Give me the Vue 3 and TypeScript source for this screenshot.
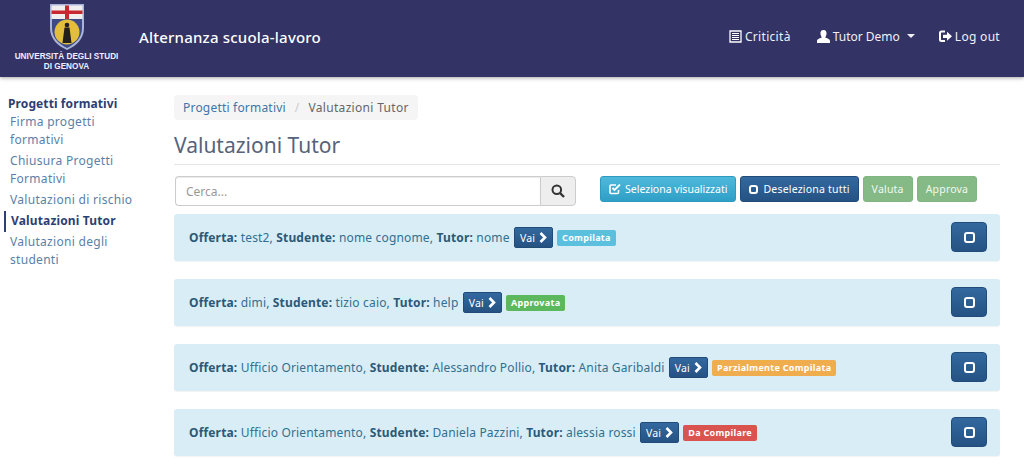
<script setup lang="ts">
type Row = {
  offerta: string;
  studente: string;
  tutor: string;
  stato: string;
  tone: string;
};

const sideLinks = [
  { label: 'Firma progetti formativi', active: false },
  { label: 'Chiusura Progetti Formativi', active: false },
  { label: 'Valutazioni di rischio', active: false },
  { label: 'Valutazioni Tutor', active: true },
  { label: 'Valutazioni degli studenti', active: false },
];

const rows: Row[] = [
  { offerta: 'test2', studente: 'nome cognome', tutor: 'nome', stato: 'Compilata', tone: 'info' },
  { offerta: 'dimi', studente: 'tizio caio', tutor: 'help', stato: 'Approvata', tone: 'success' },
  { offerta: 'Ufficio Orientamento', studente: 'Alessandro Pollio', tutor: 'Anita Garibaldi', stato: 'Parzialmente Compilata', tone: 'warning' },
  { offerta: 'Ufficio Orientamento', studente: 'Daniela Pazzini', tutor: 'alessia rossi', stato: 'Da Compilare', tone: 'danger' },
];
</script>

<template>
  <div class="page">
    <header class="navbar">
      <div class="brand">
        <svg class="crest" width="36" height="46" viewBox="0 0 36 46">
          <path d="M1 0H35V24C35 35 27 42 18 46C9 42 1 35 1 24Z" fill="#aab4d8" />
          <path d="M2.500 1.500H33.500V15H2.500Z" fill="#f1eeee" />
          <path d="M16 1.500H20V15H16Z" fill="#c8282f" />
          <path d="M2.500 6.500H33.500V10H2.500Z" fill="#c8282f" />
          <path d="M3 15H33V24C33 34 26 40 18 44C10 40 3 34 3 24Z" fill="#3d4a86" />
          <circle cx="18" cy="28" r="12.500" fill="#e3bd3c" />
          <circle cx="18" cy="21" r="2.300" fill="#231f1c" />
          <path d="M15.500 23.500H20.500L22.500 39H13.500Z" fill="#231f1c" />
        </svg>
        <div class="uni">UNIVERSITÀ DEGLI STUDI<br />DI GENOVA</div>
      </div>
      <div class="app-title">Alternanza scuola-lavoro</div>
      <nav class="nav-links">
        <a class="nav-link">
          <svg width="13" height="13" viewBox="0 0 13 13"><path d="M1 1H12V12H1Z" fill="none" stroke="#fff" stroke-width="1.300" /><path d="M3 3.500H10M3 5.500H10M3 7.500H10M3 9.500H10" stroke="#fff" /></svg>
          Criticità
        </a>
        <a class="nav-link tight">
          <svg width="13" height="13" viewBox="0 0 13 13"><path d="M6.500 0C9 0 9.800 2 9.500 4C9.300 5.500 8.700 6.500 8.200 7.300C9.500 8.500 13 8.800 13 11V13H0V11C0 8.800 3.500 8.500 4.800 7.300C4.300 6.500 3.700 5.500 3.500 4C3.200 2 4 0 6.500 0Z" fill="#fff" /></svg>
          Tutor Demo
          <span class="caret"></span>
        </a>
        <a class="nav-link">
          <svg width="13" height="13" viewBox="0 0 13 13"><path d="M6 1.500H2.500Q1 1.500 1 3V9.500Q1 11 2.500 11H6" fill="none" stroke="#fff" stroke-width="2" /><path d="M4 4.700H8V1.800L13 6.300L8 10.800V7.900H4Z" fill="#fff" /></svg>
          Log out
        </a>
      </nav>
    </header>

    <div class="body">
      <aside class="sidebar">
        <div class="side-head">Progetti formativi</div>
        <a v-for="link in sideLinks" :key="link.label" class="side-link" :class="{ active: link.active }">{{ link.label }}</a>
      </aside>

      <main class="content">
        <div class="breadcrumb">
          <a>Progetti formativi</a>
          <span class="sep">/</span>
          <span class="crumb-current">Valutazioni Tutor</span>
        </div>
        <h1 class="title">Valutazioni Tutor</h1>

        <div class="toolbar">
          <div class="search">
            <input class="search-input" placeholder="Cerca..." />
            <button class="search-btn">
              <svg width="14" height="14" viewBox="0 0 14 14"><circle cx="5.800" cy="5.800" r="4.300" fill="none" stroke="#333" stroke-width="2" /><path d="M9 9L13 13" stroke="#333" stroke-width="2.400" /></svg>
            </button>
          </div>
          <div class="actions">
            <button class="btn btn-info">
              <svg width="12" height="12" viewBox="0 0 12 12"><path d="M9.500 7V9.500Q9.500 10.500 8.500 10.500H2Q1 10.500 1 9.500V3Q1 2 2 2H7" fill="none" stroke="#fff" stroke-width="1.600" /><path d="M3.500 5L5.500 7L11 1.500" fill="none" stroke="#fff" stroke-width="1.800" /></svg>
              Seleziona visualizzati
            </button>
            <button class="btn btn-primary">
              <span class="box small"></span>
              Deseleziona tutti
            </button>
            <button class="btn btn-muted">Valuta</button>
            <button class="btn btn-muted">Approva</button>
          </div>
        </div>

        <div class="rows">
          <div v-for="row in rows" :key="row.studente" class="row">
            <div class="row-text">
              <b>Offerta:</b> {{ row.offerta }}, <b>Studente:</b> {{ row.studente }}, <b>Tutor:</b> {{ row.tutor }}
              <a class="vai">
                Vai
                <svg width="10" height="11" viewBox="0 0 10 11"><path d="M2.500 1L7 5.500L2.500 10" fill="none" stroke="#fff" stroke-width="2.600" /></svg>
              </a>
              <span class="label" :class="row.tone">{{ row.stato }}</span>
            </div>
            <button class="row-check"><span class="box"></span></button>
          </div>
        </div>
      </main>
    </div>
  </div>
</template>

<style>
html,
body {
  margin: 0;
  background: #fff;
  overflow: hidden;
}
</style>

<style scoped>
.page {
  width: 1024px;
  height: 464px;
  overflow: hidden;
  font-family: "Noto Sans", "DejaVu Sans", sans-serif;
  font-size: 12px;
  color: #4a5a6c;
}

.navbar {
  height: 77px;
  background: #333366;
  box-shadow: 0 1px 4px rgba(0, 0, 0, 0.35);
  display: flex;
  align-items: center;
  color: #fff;
  position: relative;
}

.brand {
  width: 133px;
  height: 77px;
  flex: none;
  display: flex;
  flex-direction: column;
  align-items: center;
  padding-top: 4px;
  box-sizing: border-box;
}

.crest {
  display: block;
  margin-left: 1px;
}

.uni {
  font-family: "Liberation Sans", sans-serif;
  font-size: 8.200px;
  line-height: 10px;
  font-weight: 700;
  text-align: center;
  margin-top: 2px;
  color: #eef;
}

.app-title {
  margin-left: 6px;
  font-size: 15px;
  font-weight: 500;
  margin-top: -3px;
  letter-spacing: 0.2px;
}

.nav-links {
  margin-left: auto;
  margin-right: 24px;
  display: flex;
  gap: 24px;
  margin-top: -5px;
}

.nav-link {
  display: flex;
  align-items: center;
  gap: 3px;
  font-size: 12px;
  letter-spacing: 0.3px;
  color: #f0f0f5;
}

.nav-link.tight {
  letter-spacing: 0;
  margin-left: 2px;
}

.caret {
  width: 0;
  height: 0;
  border-left: 4px solid transparent;
  border-right: 4px solid transparent;
  border-top: 4px solid #f0f0f5;
  margin-left: 4px;
}

.body {
  display: flex;
}

.sidebar {
  width: 174px;
  flex: none;
  padding: 18px 26px 0 8px;
  box-sizing: border-box;
  display: flex;
  flex-direction: column;
}

.side-head {
  font-weight: 700;
  color: #2d3f73;
  line-height: 17px;
  letter-spacing: 0.1px;
}

.side-link {
  padding: 1px 0 2px 2px;
  line-height: 18px;
  color: #5a7fa8;
  letter-spacing: 0.3px;
}

.side-link.active {
  border-left: 2px solid #2d3f73;
  margin-left: -4px;
  padding-left: 5px;
  font-weight: 700;
  color: #2d3f73;
  letter-spacing: 0.15px;
}

.content {
  width: 826px;
  flex: none;
  padding-top: 18px;
}

.breadcrumb {
  display: inline-flex;
  align-items: center;
  height: 25px;
  padding: 0 9px;
  border-radius: 4px;
  background: #f5f5f5;
  color: #666;
  letter-spacing: 0.2px;
}

.breadcrumb a {
  color: #3f76a8;
}

.crumb-current {
  letter-spacing: 0.32px;
}

.sep {
  color: #ccc;
  margin: 0 9px;
}

.title {
  margin: 12px 0 0;
  height: 32px;
  line-height: 26px;
  font-size: 21px;
  font-weight: 400;
  color: #56637a;
  border-bottom: 1px solid #e6e6e6;
}

.toolbar {
  display: flex;
  margin-top: 11px;
  height: 38px;
}

.search {
  display: flex;
  width: 401px;
  height: 30px;
  margin-left: 1px;
}

.search-input {
  flex: 1;
  min-width: 0;
  border: 1px solid #ccc;
  border-right: 0;
  border-radius: 4px 0 0 4px;
  padding: 0 10px;
  font: inherit;
  color: #555;
  box-shadow: inset 0 1px 1px rgba(0, 0, 0, 0.08);
  outline: none;
}

.search-input::placeholder {
  color: #999;
}

.search-btn {
  width: 36px;
  padding: 0;
  border: 1px solid #ccc;
  border-radius: 0 4px 4px 0;
  background: #eee;
  display: flex;
  align-items: center;
  justify-content: center;
}

.actions {
  display: flex;
  gap: 4px;
  margin-left: 24px;
}

.btn {
  height: 26px;
  padding: 0 8px;
  border-radius: 3px;
  font-family: inherit;
  font-size: 10.500px;
  letter-spacing: 0.2px;
  color: #fff;
  display: flex;
  align-items: center;
  gap: 4px;
  border: 1px solid transparent;
}

.btn-info {
  background: linear-gradient(#4fb9da, #2f9fc7);
  border-color: #2d9ac0;
  letter-spacing: 0;
}

.btn-primary {
  background: linear-gradient(#33699f, #255283);
  border-color: #214c7a;
  gap: 5px;
}

.btn-muted {
  background: #85b986;
  border-color: #80b481;
  color: #f2f8f2;
}

.box {
  display: block;
  width: 11px;
  height: 11px;
  box-sizing: border-box;
  border: 2px solid #fff;
  border-radius: 3px;
}

.box.small {
  width: 9px;
  height: 9px;
}

.rows {
  display: flex;
  flex-direction: column;
  gap: 18px;
}

.row {
  height: 47px;
  box-sizing: border-box;
  padding: 0 13px 0 15px;
  background: #d9edf7;
  border-radius: 3px;
  box-shadow: 0 1px 1px rgba(0, 0, 0, 0.05);
  display: flex;
  align-items: center;
  justify-content: space-between;
}

.row-text {
  display: flex;
  align-items: center;
  white-space: pre-wrap;
  color: #31708f;
  letter-spacing: 0.165px;
}

.row-text b {
  color: #2a5a78;
}

.vai {
  display: inline-flex;
  align-items: center;
  gap: 3px;
  height: 19px;
  padding: 0 4px 0 5px;
  margin-left: 1px;
  border-radius: 2px;
  background: linear-gradient(#33699f, #255283);
  border: 1px solid #214c7a;
  font-size: 10.500px;
  color: #fff;
  white-space: normal;
}

.label {
  height: 16px;
  line-height: 16px;
  padding: 0 5px;
  margin-left: 4px;
  border-radius: 2px;
  font-size: 9px;
  font-weight: 700;
  letter-spacing: 0.3px;
  color: #fff;
}

.info {
  background: #5bc0de;
}

.success {
  background: #5cb85c;
}

.warning {
  background: #f0ad4e;
}

.danger {
  background: #d9534f;
}

.row-check {
  width: 36px;
  height: 30px;
  padding: 0;
  margin-top: -1px;
  border-radius: 4px;
  background: linear-gradient(#33699f, #255283);
  border: 1px solid #214c7a;
  display: flex;
  align-items: center;
  justify-content: center;
}
</style>
